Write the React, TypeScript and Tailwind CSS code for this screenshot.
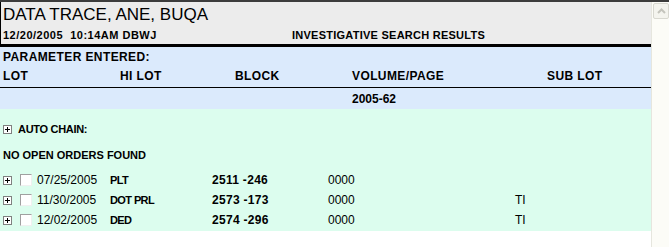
const font = "font-['Liberation_Sans',Arial,sans-serif]";

interface OrderRow {
  date: string;
  type: string;
  block: string;
  vol: string;
  sub: string;
}

const ROWS: OrderRow[] = [
  { date: "07/25/2005", type: "PLT", block: "2511 -246", vol: "0000", sub: "" },
  { date: "11/30/2005", type: "DOT PRL", block: "2573 -173", vol: "0000", sub: "TI" },
  { date: "12/02/2005", type: "DED", block: "2574 -296", vol: "0000", sub: "TI" },
];

function PlusBox() {
  return (
    <svg width="9" height="9" viewBox="0 0 9 9" className="shrink-0">
      <rect x="0.5" y="0.5" width="8" height="8" fill="#fff" stroke="#808080" />
      <path d="M2 4.5h5M4.5 2v5" stroke="#000" />
    </svg>
  );
}

function CheckBox() {
  return (
    <div className="w-[12px] h-[12px] shrink-0 bg-white border-t border-l border-t-[#a0a0a0] border-l-[#a0a0a0] border-b border-r border-b-[#f0f0f0] border-r-[#f0f0f0]" />
  );
}

export default function App() {
  return (
    <div className={`w-[669px] h-[247px] overflow-hidden bg-white border-t-2 border-[#3c3c3c] flex ${font} text-black`}>
      <div className="w-[651px] flex flex-col">
        {/* header */}
        <div className="bg-[#ececec] border-l border-black border-b-[3px] border-b-black h-[45px] pl-[2px]">
          <div className="text-[17px] leading-[20px] pt-[3px]">DATA TRACE, ANE, BUQA</div>
          <div className="flex text-[11px] font-bold leading-[13px] mt-[4px]">
            <span className="w-[289px] tracking-[0.5px]">12/20/2005&nbsp;&nbsp;10:14AM DBWJ</span>
            <span className="tracking-[0.25px]">INVESTIGATIVE SEARCH RESULTS</span>
          </div>
        </div>

        {/* parameters */}
        <div className="bg-[#dbeafc] text-[12px] font-bold tracking-[0.4px]">
          <div className="h-[19px] pl-[3px] pt-[3px] leading-[14px]">PARAMETER ENTERED:</div>
          <div className="h-[22px] flex items-center pl-[3px] pb-[2px] border-b border-black">
            <span className="w-[117px]">LOT</span>
            <span className="w-[115px]">HI LOT</span>
            <span className="w-[117px]">BLOCK</span>
            <span className="w-[195px]">VOLUME/PAGE</span>
            <span>SUB LOT</span>
          </div>
          <div className="h-[21px] flex items-center pl-[352px] tracking-normal">2005-62</div>
        </div>

        {/* results */}
        <div className="bg-[#dcfdee] h-[122px] text-[11px] pl-[3px]">
          <div className="h-[18px] mt-[11px] flex items-center gap-[6px] font-bold tracking-[-0.3px]">
            <PlusBox />
            <span>AUTO CHAIN:</span>
          </div>
          <div className="h-[18px] mt-[8px] flex items-center font-bold">NO OPEN ORDERS FOUND</div>
          <div className="mt-[6px] flex flex-col">
            {ROWS.map((r) => (
              <div key={r.date} className="h-[20px] flex items-center">
                <PlusBox />
                <span className="ml-[8px]"><CheckBox /></span>
                <span className="ml-[5px] w-[73px] text-[12px]">{r.date}</span>
                <span className="w-[102px] font-bold tracking-[-0.6px]">{r.type}</span>
                <span className="w-[116px] font-bold text-[12px] tracking-[0.3px]">{r.block}</span>
                <span className="w-[187px] text-[12px]">{r.vol}</span>
                <span className="text-[12px]">{r.sub}</span>
              </div>
            ))}
          </div>
        </div>
      </div>

      {/* scrollbar */}
      <div className="flex-1 bg-[#fcfcf7] border-l border-[#e6e6de] pt-[1px] pl-[1px]">
        <div className="w-[16px] h-[16px] rounded-[2px] border border-[#d8d8d0] bg-[#f4f4ee] flex items-center justify-center">
          <svg width="9" height="6" viewBox="0 0 9 6">
            <path d="M1 5 L4.5 1.5 L8 5" fill="none" stroke="#c4c4bc" strokeWidth="2" />
          </svg>
        </div>
      </div>
    </div>
  );
}
